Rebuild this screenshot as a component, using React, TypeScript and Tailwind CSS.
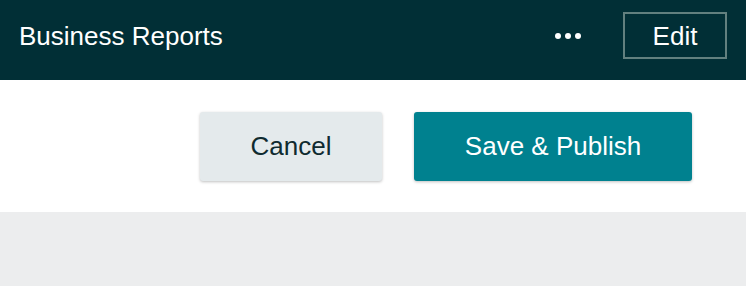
export default function App() {
  return (
    <div className="w-[746px] h-[286px] flex flex-col bg-[#ecedee] font-['Liberation_Sans',Arial,sans-serif]">
      {/* Top bar */}
      <header className="h-[80px] bg-[#012f36] flex items-center pl-[19px] pr-[19px] pb-[9px] text-white">
        <h1 className="text-[26px] leading-none flex-1">Business Reports</h1>
        <button className="flex items-center gap-[4px] mr-[42px]" aria-label="More">
          <span className="w-[6px] h-[6px] rounded-full bg-white" />
          <span className="w-[6px] h-[6px] rounded-full bg-white" />
          <span className="w-[6px] h-[6px] rounded-full bg-white" />
        </button>
        <button className="w-[104px] h-[47px] border-2 border-[#62807f] text-[26px] leading-none text-white">
          Edit
        </button>
      </header>

      {/* Action row */}
      <div className="h-[132px] bg-white flex items-center justify-end gap-[32px] pr-[54px]">
        <button className="w-[182px] h-[69px] rounded-[3px] bg-[#e4eaec] text-[#0f2b30] text-[26px] shadow-[0_1px_3px_rgba(0,0,0,0.25)]">
          Cancel
        </button>
        <button className="w-[278px] h-[69px] rounded-[3px] bg-[#00818f] text-white text-[26px] shadow-[0_1px_3px_rgba(0,0,0,0.25)]">
          Save &amp; Publish
        </button>
      </div>
    </div>
  );
}
